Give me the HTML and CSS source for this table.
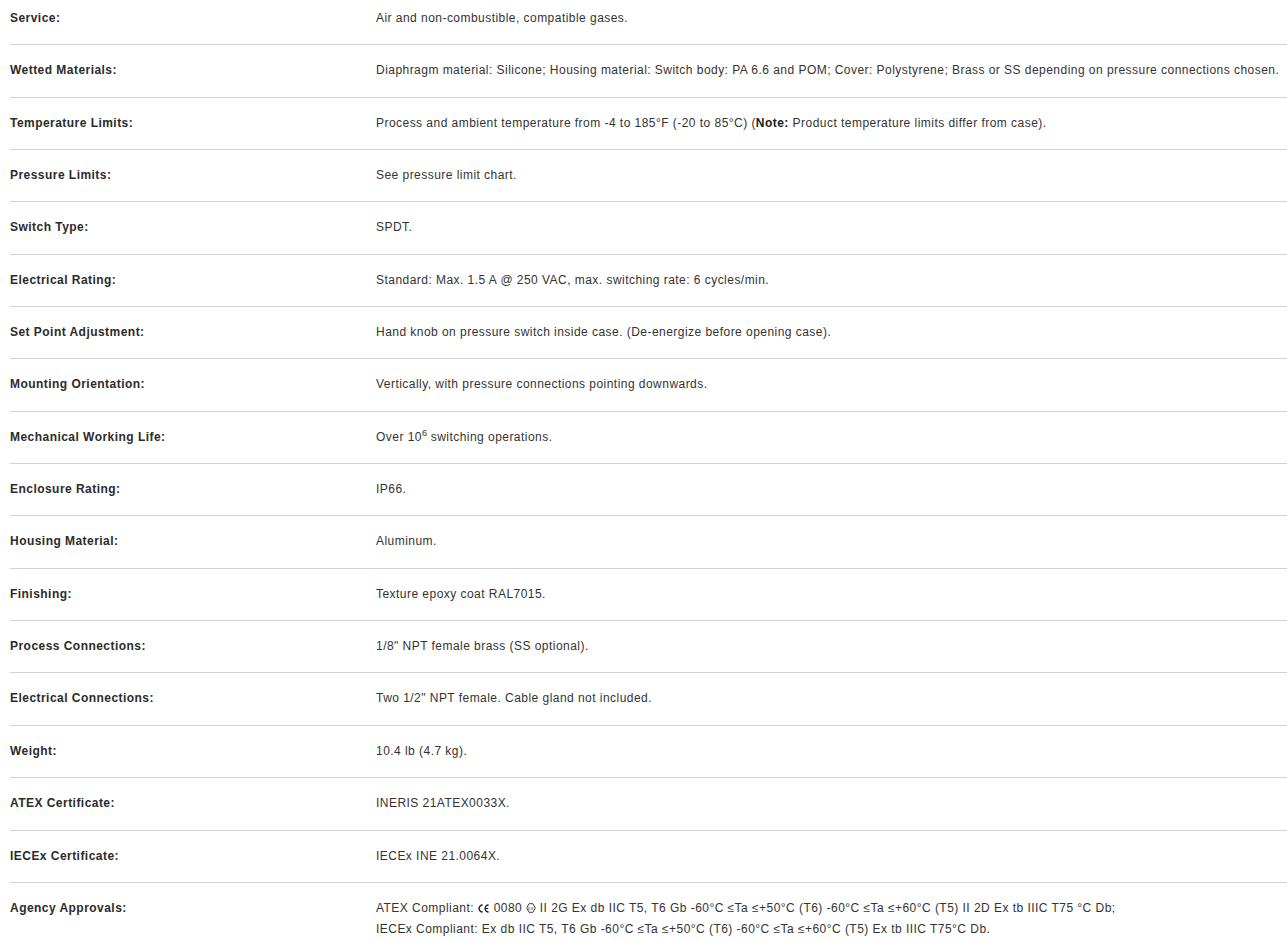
FILE: index.html
```html
<!DOCTYPE html>
<html>
<head>
<meta charset="utf-8">
<link rel="stylesheet" href="styles.css">
</head>
<body>
<div class="specs">
  <div class="row first"><div class="label">Service:</div><div class="value">Air and non-combustible, compatible gases.</div></div>
  <div class="row"><div class="label">Wetted Materials:</div><div class="value">Diaphragm material: Silicone; Housing material: Switch body: PA 6.6 and POM; Cover: Polystyrene; Brass or SS depending on pressure connections chosen.</div></div>
  <div class="row"><div class="label">Temperature Limits:</div><div class="value">Process and ambient temperature from -4 to 185°F (-20 to 85°C) (<b>Note:</b> Product temperature limits differ from case).</div></div>
  <div class="row"><div class="label">Pressure Limits:</div><div class="value">See pressure limit chart.</div></div>
  <div class="row"><div class="label">Switch Type:</div><div class="value">SPDT.</div></div>
  <div class="row"><div class="label">Electrical Rating:</div><div class="value">Standard: Max. 1.5 A @ 250 VAC, max. switching rate: 6 cycles/min.</div></div>
  <div class="row"><div class="label">Set Point Adjustment:</div><div class="value">Hand knob on pressure switch inside case. (De-energize before opening case).</div></div>
  <div class="row"><div class="label">Mounting Orientation:</div><div class="value">Vertically, with pressure connections pointing downwards.</div></div>
  <div class="row"><div class="label">Mechanical Working Life:</div><div class="value">Over 10<sup>6</sup> switching operations.</div></div>
  <div class="row"><div class="label">Enclosure Rating:</div><div class="value">IP66.</div></div>
  <div class="row"><div class="label">Housing Material:</div><div class="value">Aluminum.</div></div>
  <div class="row"><div class="label">Finishing:</div><div class="value">Texture epoxy coat RAL7015.</div></div>
  <div class="row"><div class="label">Process Connections:</div><div class="value">1/8" NPT female brass (SS optional).</div></div>
  <div class="row"><div class="label">Electrical Connections:</div><div class="value">Two 1/2" NPT female. Cable gland not included.</div></div>
  <div class="row"><div class="label">Weight:</div><div class="value">10.4 lb (4.7 kg).</div></div>
  <div class="row"><div class="label">ATEX Certificate:</div><div class="value">INERIS 21ATEX0033X.</div></div>
  <div class="row"><div class="label">IECEx Certificate:</div><div class="value">IECEx INE 21.0064X.</div></div>
  <div class="row"><div class="label">Agency Approvals:</div><div class="value">ATEX Compliant: <svg class="ce" viewBox="0 0 12 9" width="12" height="9"><path d="M4.6 1 A3.5 3.5 0 0 0 4.6 8" fill="none" stroke="#222" stroke-width="1.5"/><path d="M10.6 1 A3.5 3.5 0 0 0 10.6 8" fill="none" stroke="#222" stroke-width="1.5"/><path d="M7.6 4.5 H10.2" stroke="#222" stroke-width="1.2"/></svg> 0080 <svg class="ex" viewBox="0 0 10 10" width="10" height="10"><polygon points="3,0.7 7,0.7 9.3,5 7,9.3 3,9.3 0.7,5" fill="none" stroke="#444" stroke-width="1"/><text x="5" y="7" font-size="5.5" text-anchor="middle" fill="#444" font-family="Liberation Sans, sans-serif">εx</text></svg> II 2G Ex db IIC T5, T6 Gb -60°C ≤Ta ≤+50°C (T6) -60°C ≤Ta ≤+60°C (T5) II 2D Ex tb IIIC T75 °C Db;<br>IECEx Compliant: Ex db IIC T5, T6 Gb -60°C ≤Ta ≤+50°C (T6) -60°C ≤Ta ≤+60°C (T5) Ex tb IIIC T75°C Db.</div></div>
</div>
</body>
</html>
```
FILE: styles.css
```css
html, body {
  margin: 0;
  padding: 0;
  background: #fff;
}
body {
  font-family: "Liberation Sans", Arial, sans-serif;
  font-size: 12px;
  letter-spacing: 0.46px;
  color: #333;
  overflow: hidden;
}
.specs {
  padding-left: 10px;
}
.row {
  display: grid;
  grid-template-columns: 366px 1fr;
  padding: 15px 0;
  line-height: 21.35px;
  border-bottom: 1px solid #d2d2d2;
  white-space: nowrap;
}
.row.first {
  padding-top: 8px;
}
.label {
  font-weight: bold;
  color: #2b2b2b;
}
.value b {
  color: #222;
}
.value sup {
  font-size: 9px;
  line-height: 0;
  vertical-align: 5px;
  letter-spacing: 0;
}
.ce, .ex {
  vertical-align: -1px;
}
```
